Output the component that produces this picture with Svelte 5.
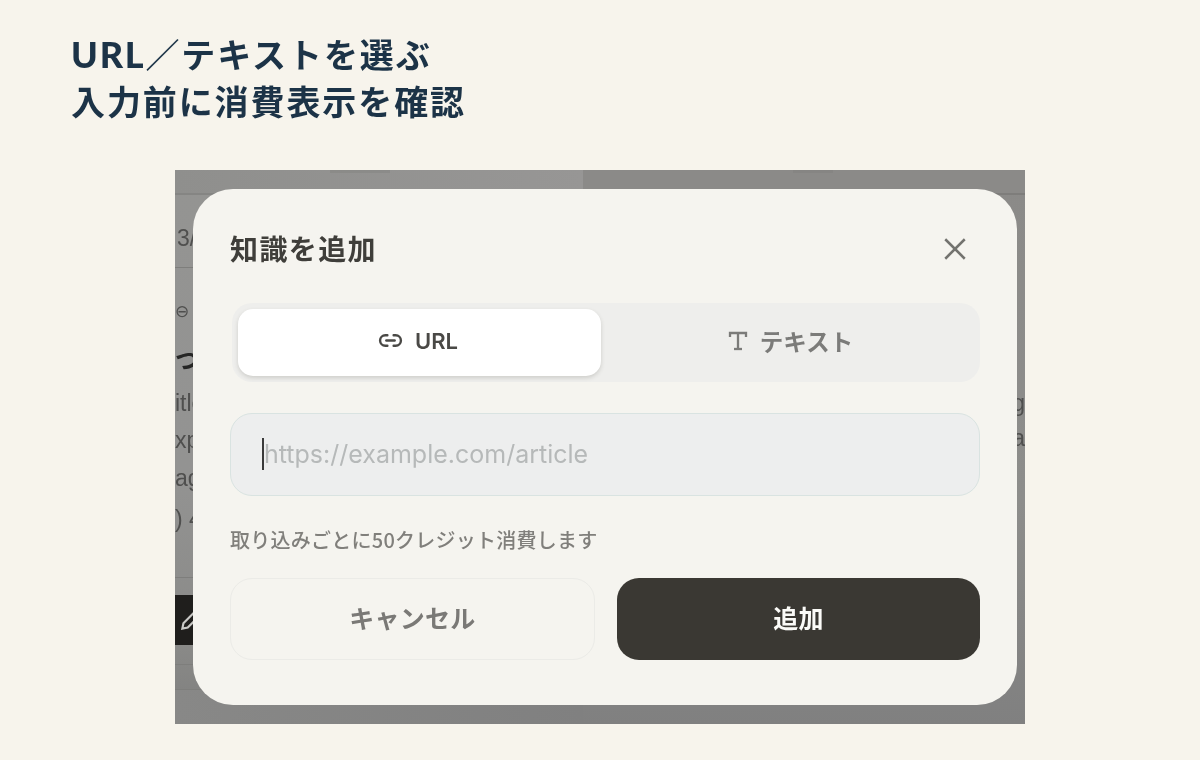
<script lang="ts">
  type Tab = "url" | "text";

  let tab: Tab = $state("url");

  const leftRows = [
    { text: "3/12", cls: "h73 line" },
    { text: "⊖", cls: "h67 small" },
    { text: "つ:", cls: "h50 heavy" },
    { text: "itle", cls: "h37" },
    { text: "xp", cls: "h37" },
    { text: "age", cls: "h38" },
    { text: ") 4", cls: "h81 line" },
  ];
</script>

<main class="page">
  <h1 class="heading"><span class="heading-latin">URL</span>／テキストを選ぶ<br />入力前に消費表示を確認</h1>

  <section class="shot">
    <div class="under">
      <div class="under-left">
        <div class="topbar"><span class="ghost"></span></div>
        {#each leftRows as row}
          <div class="row {row.cls}">{row.text}</div>
        {/each}
        <div class="gap17"></div>
        <div class="dark">
          <svg width="26" height="26" viewBox="0 0 24 24" fill="none" stroke="#c9c9c6" stroke-width="2">
            <path d="M4 20l1-5L16 4l4 4L9 19z" />
          </svg>
        </div>
        <div class="h20 line"></div>
        <div class="h25 line"></div>
        <div class="tail"></div>
      </div>
      <div class="under-right">
        <div class="topbar dim"><span class="ghost short"></span></div>
        <div class="spacer"></div>
        <div class="frag">g</div>
        <div class="frag">a</div>
      </div>
    </div>

    <div class="modal">
      <header class="modal-head">
        <h2>知識を追加</h2>
        <button class="close" aria-label="閉じる">
          <svg width="26" height="26" viewBox="0 0 24 24" fill="none" stroke="currentColor" stroke-width="2.3">
            <path d="M3 3l18 18M21 3L3 21" />
          </svg>
        </button>
      </header>

      <div class="tabs">
        <button class="tab" class:active={tab === "url"} onclick={() => (tab = "url")}>
          <svg width="25" height="25" viewBox="0 0 24 24" fill="none" stroke="currentColor" stroke-width="2.3" stroke-linecap="round">
            <path d="M9 17H7A5 5 0 0 1 7 7h2" />
            <path d="M15 7h2a5 5 0 1 1 0 10h-2" />
            <path d="M8 12h8" />
          </svg>
          <span class="latin">URL</span>
        </button>
        <button class="tab" class:active={tab === "text"} onclick={() => (tab = "text")}>
          <svg width="20" height="20" viewBox="0 0 20 20" fill="none" stroke="currentColor" stroke-width="2.3">
            <path d="M2 6V2h16v4" />
            <path d="M10 2v16" />
            <path d="M6 18h8" />
          </svg>
          <span class="jp">テキスト</span>
        </button>
      </div>

      <div class="field">
        <span class="caret"></span>
        <span class="placeholder">https://example.com/article</span>
      </div>

      <p class="hint">取り込みごとに50クレジット消費します</p>

      <div class="actions">
        <button class="btn cancel">キャンセル</button>
        <button class="btn primary">追加</button>
      </div>
    </div>
  </section>
</main>

<style>
  :global(body) {
    margin: 0;
    background: #f7f4ec;
  }

  .page {
    height: 760px;
    box-sizing: border-box;
    padding-top: 30px;
    overflow: hidden;
    font-family: "Noto Sans CJK JP", "Noto Sans", sans-serif;
  }

  .heading {
    margin: 0 0 46px 71px;
    font-size: 34px;
    line-height: 47px;
    font-weight: 700;
    letter-spacing: 0.056em;
    color: #1c3347;
    white-space: nowrap;
    filter: blur(0.3px);
  }

  .heading-latin {
    font-family: Lato, sans-serif;
    font-size: 36px;
    font-weight: 900;
    letter-spacing: 0.05em;
    line-height: 1;
  }

  .shot {
    position: relative;
    width: 850px;
    height: 554px;
    margin-left: 175px;
    overflow: hidden;
    filter: blur(0.5px);
    background: linear-gradient(180deg, #949492 0%, #939392 55%, #8a8a88 85%, #7f7f7e 100%);
  }

  .under {
    display: grid;
    grid-template-columns: 408px 1fr;
    height: 100%;
    font-family: "Liberation Sans", sans-serif;
    font-size: 23px;
    color: #4f4f4e;
  }

  .under-left,
  .under-right {
    display: flex;
    flex-direction: column;
    min-width: 0;
  }

  .under-right {
    background: linear-gradient(180deg, #8b8a88 0%, #8d8d8b 60%, #808080 100%);
  }

  .topbar {
    flex: none;
    height: 25px;
    padding-left: 155px;
    box-sizing: border-box;
    background: linear-gradient(90deg, #8f8f8d, #979695);
    border-bottom: 2px solid #858583;
    overflow: hidden;
  }

  .topbar.dim {
    padding-left: 210px;
    background: #8b8a88;
    border-bottom-color: #7e7d7b;
  }

  .ghost {
    display: block;
    width: 60px;
    height: 3px;
    background: #7b7a78;
    opacity: 0.3;
  }

  .ghost.short {
    width: 40px;
  }

  .row {
    display: flex;
    align-items: center;
    white-space: nowrap;
    overflow: hidden;
  }

  .line {
    border-bottom: 1px solid #7e7e7c;
    box-sizing: border-box;
  }

  .h73 { height: 73px; padding-left: 2px; padding-top: 14px; box-sizing: border-box; }
  .h67 { height: 67px; padding-bottom: 2px; padding-top: 22px; box-sizing: border-box; }
  .h50 { height: 50px; padding-bottom: 4px; box-sizing: border-box; }
  .h37 { height: 37px; }
  .h38 { height: 38px; }
  .h81 { height: 81px; padding-bottom: 36px; }
  .h20 { flex: none; height: 20px; }
  .h25 { flex: none; height: 25px; }

  .small { font-size: 17px; }
  .heavy { font-size: 24px; font-weight: 700; color: #262625; font-family: "Noto Sans CJK JP", sans-serif; }

  .gap17 { flex: none; height: 17px; }

  .dark {
    flex: none;
    height: 50px;
    display: flex;
    align-items: center;
    padding-left: 3px;
    background: #1f1e1c;
  }

  .tail {
    flex: 1;
    background: linear-gradient(90deg, #888887, #808080);
  }

  .spacer { flex: none; height: 191px; }

  .frag {
    height: 35px;
    line-height: 35px;
    text-align: right;
  }

  .modal {
    position: absolute;
    top: 19px;
    left: 18px;
    width: 824px;
    height: 516px;
    box-sizing: border-box;
    padding: 0 37px;
    border-radius: 40px;
    background: #f5f4ef;
    display: flex;
    flex-direction: column;
  }

  .modal-head {
    display: flex;
    align-items: center;
    justify-content: space-between;
    height: 114px;
    padding-top: 6px;
    box-sizing: border-box;
    flex: none;
  }

  .modal-head h2 {
    margin: 0 0 2px;
    font-size: 28px;
    font-weight: 700;
    letter-spacing: 0.05em;
    color: #3f3e3a;
  }

  .close {
    display: flex;
    padding: 0;
    margin-right: 12px;
    border: 0;
    background: none;
    color: #73736f;
  }

  .tabs {
    display: grid;
    grid-template-columns: 1fr 1fr;
    gap: 10px;
    flex: none;
    height: 79px;
    margin-left: 2px;
    padding: 6px;
    box-sizing: border-box;
    border-radius: 20px;
    background: #eeeeec;
  }

  .tab {
    display: flex;
    align-items: center;
    justify-content: center;
    gap: 12px;
    padding: 0 3px 4px 0;
    border: 0;
    border-radius: 15px;
    background: none;
    color: #7b7b79;
    font: inherit;
  }

  .tab + .tab {
    padding-right: 4px;
  }

  .tab.active {
    background: #ffffff;
    color: #4a4946;
    box-shadow: 0 2px 4px rgba(60, 60, 50, 0.18);
  }

  .latin {
    font-family: Inter, sans-serif;
    font-size: 22px;
    font-weight: 600;
  }

  .jp {
    font-size: 23.5px;
    font-weight: 700;
  }

  .field {
    display: flex;
    align-items: center;
    flex: none;
    height: 83px;
    margin-top: 31px;
    padding: 0 0 1px 31px;
    box-sizing: border-box;
    border: 1px solid #d9e3e1;
    border-radius: 22px;
    background: #edeeee;
  }

  .caret {
    width: 2px;
    height: 32px;
    background: #3a3a3a;
    flex: none;
  }

  .placeholder {
    margin: 0 0 1px 0;
    font-family: Inter, sans-serif;
    font-size: 25px;
    color: #b6b9b9;
    white-space: nowrap;
  }

  .hint {
    margin: 28px 0 0;
    flex: none;
    height: 54px;
    line-height: 32px;
    font-size: 20px;
    font-weight: 500;
    letter-spacing: 0.25px;
    color: #807f7b;
    white-space: nowrap;
  }

  .actions {
    display: grid;
    grid-template-columns: 365px 363px;
    gap: 22px;
    flex: none;
    height: 82px;
  }

  .btn {
    padding: 0 0 5px;
    border-radius: 22px;
    font: inherit;
    font-size: 25px;
    font-weight: 700;
    letter-spacing: 0.01em;
  }

  .cancel {
    border: 1px solid #ebebe7;
    background: none;
    color: #7a7976;
  }

  .primary {
    border: 0;
    background: #3a3833;
    color: #fbfbf8;
  }
</style>
